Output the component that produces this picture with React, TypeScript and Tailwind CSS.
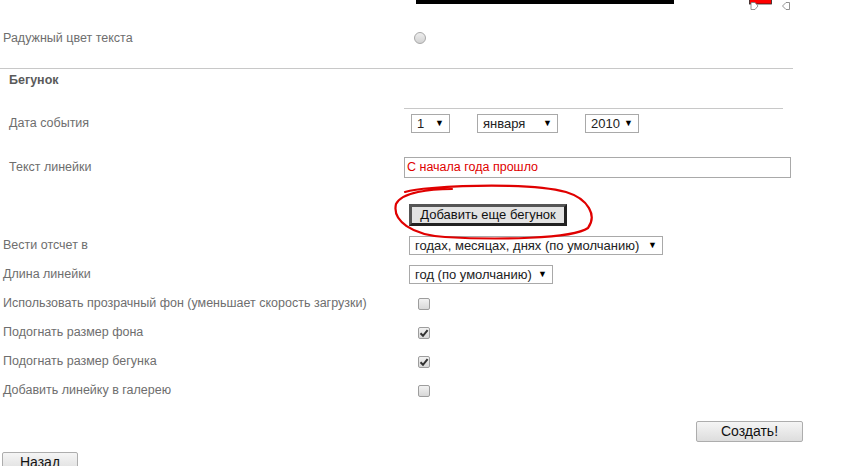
import React from "react";

const font = { fontFamily: '"Liberation Sans", Arial, sans-serif' };

function Label({ children, pl = "pl-[3px]" }: { children: React.ReactNode; pl?: string }) {
  return <div className={`w-[404px] shrink-0 ${pl} text-[12.5px] text-[#6e6e6e]`}>{children}</div>;
}

function Select({ text, w }: { text: string; w: string }) {
  return (
    <div className={`${w} h-[19px] border border-[#a9a9a9] bg-white flex items-center justify-between pl-[5px] pr-[5px] text-[13px] text-[#222] leading-none`}>
      <span>{text}</span>
      <span className="text-[9px] text-black">▼</span>
    </div>
  );
}

function Checkbox({ checked }: { checked?: boolean }) {
  return (
    <div className="ml-[9px] w-[12px] h-[12px] rounded-[2px] border border-[#9d9d9d] bg-gradient-to-b from-[#f2f2f2] to-[#d8d8d8] flex items-center justify-center">
      {checked && (
        <svg width="10" height="10" viewBox="0 0 10 10">
          <path d="M1.5 5.2 L4 7.8 L8.6 2.2" fill="none" stroke="#333" strokeWidth="2" />
        </svg>
      )}
    </div>
  );
}

function Row({ label, children }: { label: string; children: React.ReactNode }) {
  return (
    <div className="flex items-center h-[29px]">
      <Label>{label}</Label>
      <div className="flex items-center pl-[5px]">{children}</div>
    </div>
  );
}

export default function App() {
  return (
    <div className="relative w-[848px] h-[466px] overflow-hidden bg-white" style={font}>
      {/* top fragments */}
      <div className="flex items-start h-[20px]">
        <div className="ml-[416px] w-[258px] h-[4px] bg-black" />
        <svg className="ml-[74px]" width="46" height="12" viewBox="0 0 46 12">
          <rect x="1.5" y="-1" width="22" height="5" fill="#f00" stroke="#222" strokeWidth="0.8" />
          <polygon points="3,2.5 7,2.5 10,6 7,9.5 3,9.5" fill="#fff" stroke="#777" strokeWidth="0.8" />
          <polygon points="41.5,2.5 41.5,9.5 38,9.5 34.5,6 38,2.5" fill="#fff" stroke="#777" strokeWidth="0.8" />
        </svg>
      </div>

      {/* Радужный */}
      <div className="flex items-center h-[36px]">
        <Label>Радужный цвет текста</Label>
        <div className="ml-[10px] w-[12px] h-[12px] rounded-full border border-[#a8a8a8] bg-gradient-to-b from-[#eeeeee] to-[#d2d2d2]" />
      </div>

      <div className="h-[12px]" />
      <div className="w-[793px] h-px bg-[#c8c8c8]" />

      <div className="flex items-center h-[23px] pl-[9px] text-[12.5px] font-bold text-[#5a5a5a]">Бегунок</div>

      <div className="h-[16px]" />
      <div className="ml-[404px] w-[379px] h-px bg-[#c8c8c8]" />

      {/* Дата */}
      <div className="flex items-center h-[28px]">
        <Label pl="pl-[9px]">Дата события</Label>
        <div className="flex items-center pl-[7px] gap-[27px]">
          <Select text="1" w="w-[39px]" />
          <div className="flex items-center gap-[27px]">
            <Select text="января" w="w-[81px]" />
            <Select text="2010" w="w-[54px]" />
          </div>
        </div>
      </div>

      {/* Текст */}
      <div className="flex items-center h-[60px]">
        <Label pl="pl-[9px]">Текст линейки</Label>
        <div className="w-[387px] h-[21px] border border-[#a9a9a9] flex items-center pl-[2px] text-[12.5px] text-[#e00000]">
          С начала года прошло
        </div>
      </div>

      {/* Добавить */}
      <div className="flex items-start h-[34px] pt-[7px]">
        <div className="ml-[409px] w-[158px] h-[22px] border-[3px] border-t-[#555] border-l-[#555] border-r-[#222] border-b-[#222] bg-[#e3e3e3] flex items-center justify-center text-[13px] text-[#111]">
          Добавить еще бегунок
        </div>
      </div>

      <Row label="Вести отсчет в">
        <Select text="годах, месяцах, днях (по умолчанию)" w="w-[254px]" />
      </Row>
      <Row label="Длина линейки">
        <Select text="год (по умолчанию)" w="w-[144px]" />
      </Row>
      <Row label="Использовать прозрачный фон (уменьшает скорость загрузки)">
        <Checkbox />
      </Row>
      <Row label="Подогнать размер фона">
        <Checkbox checked />
      </Row>
      <Row label="Подогнать размер бегунка">
        <Checkbox checked />
      </Row>
      <Row label="Добавить линейку в галерею">
        <Checkbox />
      </Row>

      <div className="h-[16px]" />
      <div className="flex">
        <div className="ml-[696px] w-[107px] h-[21px] rounded-[2px] border border-[#adadad] bg-gradient-to-b from-[#f5f5f5] to-[#dddddd] flex items-center justify-center text-[14px] text-[#111]">
          Создать!
        </div>
      </div>

      <div className="h-[10px]" />
      <div className="flex">
        <div className="ml-[2px] w-[76px] h-[21px] rounded-[2px] border border-[#adadad] bg-gradient-to-b from-[#f5f5f5] to-[#dddddd] flex items-center justify-center text-[14px] text-[#111]">
          Назад
        </div>
      </div>

      {/* red annotation */}
      <svg className="absolute left-0 top-0 pointer-events-none" width="848" height="466" viewBox="0 0 848 466">
        <path
          d="M452 189 C430 189, 402 192, 396 204 C392 221, 412 235, 445 237 C495 240, 573 239, 588 228 C597 216, 589 199, 566 192 C540 185, 485 184, 432 188 C420 189, 412 190, 405 192"
          fill="none"
          stroke="#e00000"
          strokeWidth="2.2"
          strokeLinecap="round"
        />
      </svg>
    </div>
  );
}
